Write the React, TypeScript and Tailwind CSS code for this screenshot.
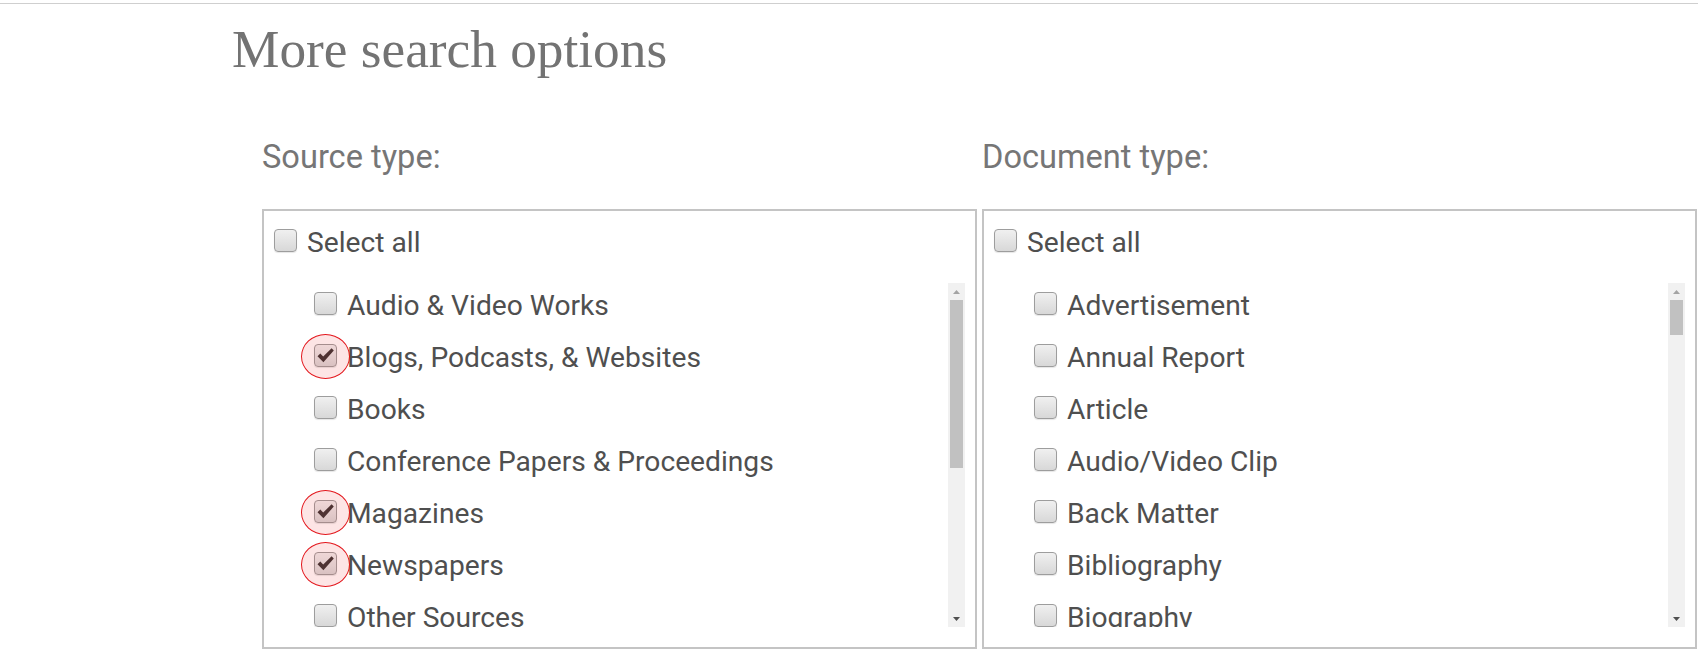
import type { ReactNode } from 'react'

type Item = { label: string; checked?: boolean }

const sourceTypes: Item[] = [
  { label: 'Audio & Video Works' },
  { label: 'Blogs, Podcasts, & Websites', checked: true },
  { label: 'Books' },
  { label: 'Conference Papers & Proceedings' },
  { label: 'Magazines', checked: true },
  { label: 'Newspapers', checked: true },
  { label: 'Other Sources' },
  { label: 'Reports' },
  { label: 'Scholarly Journals' },
  { label: 'Trade Journals' },
  { label: 'Wire Feeds' },
]

const documentTypes: Item[] = [
  { label: 'Advertisement' },
  { label: 'Annual Report' },
  { label: 'Article' },
  { label: 'Audio/Video Clip' },
  { label: 'Back Matter' },
  { label: 'Bibliography' },
  { label: 'Biography' },
  { label: 'Book' },
  { label: 'Book Chapter' },
  { label: 'Book Review' },
  { label: 'Case Study' },
  { label: 'Commentary' },
  { label: 'Conference Paper' },
  { label: 'Correspondence' },
  { label: 'Editorial' },
  { label: 'Essay' },
  { label: 'Feature' },
  { label: 'Front Matter' },
  { label: 'Interview' },
  { label: 'Letter' },
]

function CheckBox({ checked = false }: { checked?: boolean }) {
  return (
    <span className="relative flex h-[23px] w-[23px] shrink-0 items-center justify-center rounded-[4px] border border-[#9d9d9d] bg-linear-to-b from-[#f0f0f0] to-[#d8d8d8] shadow-[0_1px_1px_rgba(0,0,0,0.1)]">
      {checked && (
        <svg width="19" height="17" viewBox="0 0 19 17" aria-hidden="true">
          <path d="M1.5 9.2 L4.3 6.6 L7.2 9.6 L15.6 1.2 L17.8 3.6 L7.4 15.2 Z" fill="#3d3838" />
        </svg>
      )}
      {checked && (
        <span className="absolute left-[-14px] top-[-11px] h-[45px] w-[49px] rounded-[50%] border border-[#e3161c] bg-[rgba(235,0,0,0.1)]" />
      )}
    </span>
  )
}

function Label({ children }: { children: ReactNode }) {
  return (
    <span className="whitespace-nowrap text-[28.2px] leading-[28px] text-[#4f4f4f]">{children}</span>
  )
}

function Row({ item }: { item: Item }) {
  return (
    <div className="mb-[29px] flex h-[23px] items-start gap-[10px]">
      <CheckBox checked={item.checked} />
      <Label>{item.label}</Label>
    </div>
  )
}

function Scrollbar({ thumb }: { thumb: number }) {
  return (
    <div className="mr-[10px] flex h-full w-[17px] shrink-0 flex-col bg-[#f1f1f1]">
      <div className="flex h-[17px] items-center justify-center">
        <svg width="7" height="4" viewBox="0 0 7 4" aria-hidden="true">
          <path d="M3.5 0 L7 4 L0 4 Z" fill="#a3a3a3" />
        </svg>
      </div>
      <div className="mx-[2px] bg-[#c1c1c1]" style={{ height: thumb }} />
      <div className="flex-1" />
      <div className="flex h-[17px] items-center justify-center">
        <svg width="7" height="4" viewBox="0 0 7 4" aria-hidden="true">
          <path d="M0 0 L7 0 L3.5 4 Z" fill="#505050" />
        </svg>
      </div>
    </div>
  )
}

function Column({ title, items, thumb }: { title: string; items: Item[]; thumb: number }) {
  return (
    <div>
      <h2 className="text-[32.6px] leading-[32px] text-[#767676]">{title}</h2>
      <div className="mt-[36px] flex h-[440px] flex-col border-2 border-[#c4c4c4] pt-[18px]">
        <div className="flex h-[23px] items-start gap-[10px] pl-[10px]">
          <CheckBox />
          <Label>Select all</Label>
        </div>
        <div className="mt-[31px] flex h-[344px]">
          <div className="flex-1 overflow-hidden pl-[50px] pt-[9px]">
            {items.map((item) => (
              <Row key={item.label} item={item} />
            ))}
          </div>
          <Scrollbar thumb={thumb} />
        </div>
      </div>
    </div>
  )
}

export default function App() {
  return (
    <div className="h-[652px] overflow-hidden bg-white pt-[3px] font-['Roboto',sans-serif]">
      <div className="border-t border-[#cfcfcf]">
        <div className="pl-[232px]">
          <h1 className="mt-[19px] font-['Liberation_Serif',serif] text-[53.3px] font-normal leading-[53px] text-[#737373]">
            More search options
          </h1>
          <div className="ml-[30px] mt-[65px] grid grid-cols-[715px_715px] gap-x-[5px]">
            <Column title="Source type:" items={sourceTypes} thumb={168} />
            <Column title="Document type:" items={documentTypes} thumb={35} />
          </div>
        </div>
      </div>
    </div>
  )
}
